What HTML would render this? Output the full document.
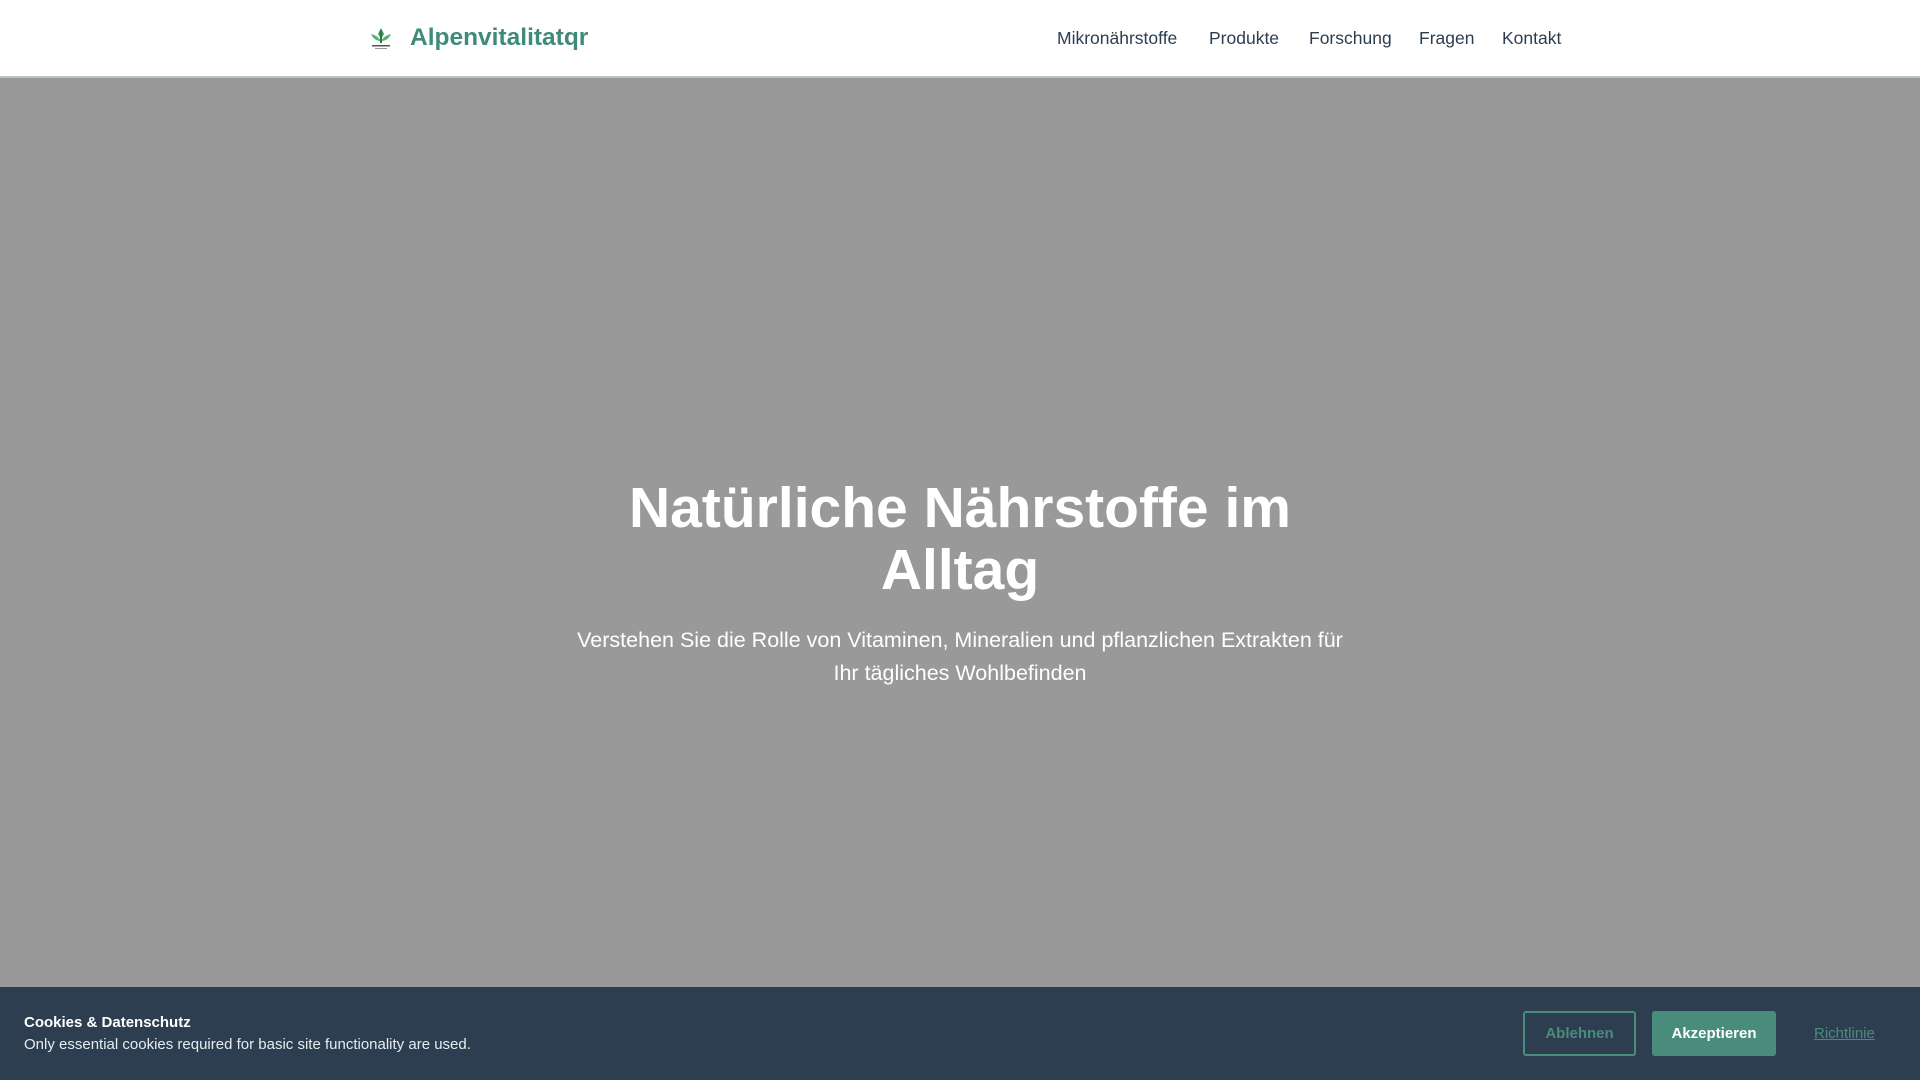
<!DOCTYPE html>
<html><head><meta charset="utf-8"><style>
*{margin:0;padding:0;box-sizing:border-box}
body{width:1920px;height:1080px;overflow:hidden;font-family:"Liberation Sans","DejaVu Sans",sans-serif;background:#999}
header{position:absolute;left:0;top:0;width:1920px;height:78px;background:#fff;border-bottom:2px solid #b8c4c0}
.logo{position:absolute;left:368px;top:25px;width:26px;height:28px}
.brand{position:absolute;left:410px;top:24px;font-size:24.5px;font-weight:bold;color:#3f8a78}
nav a{position:absolute;top:28px;font-size:17.5px;color:#2c3e50;text-decoration:none}
.hero{position:absolute;top:78px;left:0;width:1920px;height:909px;background:#999}
h1{position:absolute;left:560px;width:800px;top:477px;text-align:center;color:#fff;font-size:57px;line-height:62px;font-weight:bold}
.sub{position:absolute;left:565px;width:790px;top:624px;text-align:center;color:#fff;font-size:21.5px;line-height:33px}
.cookie{position:absolute;left:0;top:987px;width:1920px;height:93px;background:#2c3e50;color:#eef}
.ct{position:absolute;left:24px;top:27px;font-size:15px;font-weight:bold;color:#fff}
.cb{position:absolute;left:24px;top:49px;font-size:15px;color:#e8ecef}
.b1{position:absolute;left:1523px;top:24px;width:113px;height:45px;border:2px solid #4a8c7c;border-radius:3px;color:#4a8c7c;font-weight:bold;font-size:15px;text-align:center;line-height:42px}
.b2{position:absolute;left:1652px;top:24px;width:124px;height:45px;background:#4a8c7c;border-radius:3px;color:#fff;font-weight:bold;font-size:15px;text-align:center;line-height:46px}
.rl{position:absolute;left:1814px;top:38px;font-size:15px;color:#4a8c7c;text-decoration:underline}
</style></head><body>
<header>
<svg class="logo" viewBox="0 0 26 28"><path d="M13 3 L16 9 L13 14 L10 9Z" fill="#3a9a5a"/><path d="M3 9 Q9 10 13 16 Q6 16 3 9Z" fill="#5ab070"/><path d="M23 9 Q17 10 13 16 Q20 16 23 9Z" fill="#5ab070"/><rect x="12" y="5" width="2" height="13" fill="#2a7a4a"/><rect x="4" y="20" width="18" height="1.5" fill="#555"/><rect x="7" y="23" width="12" height="1" fill="#999"/></svg>
<div class="brand">Alpenvitalitatqr</div>
<nav><a style="left:1057px">Mikronährstoffe</a><a style="left:1209px">Produkte</a><a style="left:1309px">Forschung</a><a style="left:1419px">Fragen</a><a style="left:1502px">Kontakt</a></nav>
</header>
<div class="hero"></div>
<h1>Natürliche Nährstoffe im Alltag</h1>
<div class="sub">Verstehen Sie die Rolle von Vitaminen, Mineralien und pflanzlichen Extrakten für Ihr tägliches Wohlbefinden</div>
<div class="cookie">
<div class="ct">Cookies &amp; Datenschutz</div>
<div class="cb">Only essential cookies required for basic site functionality are used.</div>
<div class="b1">Ablehnen</div>
<div class="b2">Akzeptieren</div>
<div class="rl">Richtlinie</div>
</div>
</body></html>
